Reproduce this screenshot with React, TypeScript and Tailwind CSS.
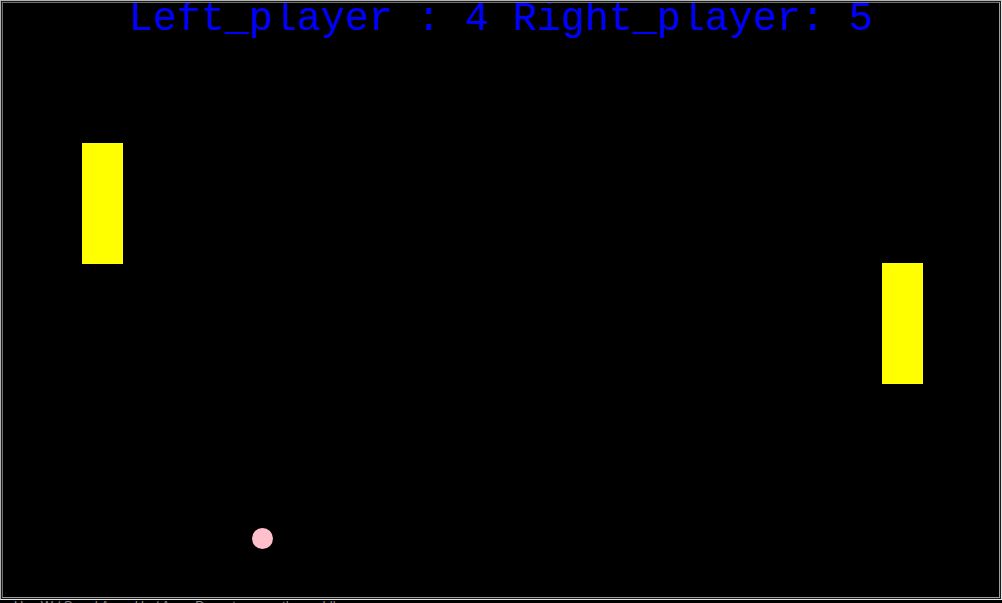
import React from 'react';

const paddles = [
  { id: 'left', x: 80, y: 141 },
  { id: 'right', x: 880, y: 261 },
];

export default function App() {
  const score = { left: 4, right: 5 };

  return (
    <div className="w-[1002px] h-[603px] overflow-hidden bg-black">
      {/* canvas frame, groove-ish border */}
      <div className="w-[1002px] h-[600px] border border-t-[#b4b4b4] border-l-[#b4b4b4] border-b-[#e6e6e6] border-r-[#e6e6e6]">
        <div className="w-full h-full border border-[#1a1a1a]">
          <div className="relative w-full h-full border border-t-[#707070] border-l-[#707070] border-b-[#a0a0a0] border-r-[#a0a0a0] bg-black overflow-hidden">
            <div className="absolute -top-[3px] left-0 right-0 text-center font-['Liberation_Mono',monospace] text-[40px] leading-[40px] text-[#0000ff] whitespace-pre">
              {`Left_player : ${score.left} Right_player: ${score.right}`}
            </div>
            {paddles.map((p) => (
              <div
                key={p.id}
                className="absolute w-[41px] h-[121px] bg-[#ffff00]"
                style={{ left: p.x - 1, top: p.y - 1 }}
              />
            ))}
            <div className="absolute left-[249px] top-[525px] w-[21px] h-[21px] rounded-full bg-[#ffc0cb]" />
          </div>
        </div>
      </div>
      <p className="pl-[14px] font-['Liberation_Sans',sans-serif] text-[13px] leading-[14px] text-[#8a8a8a] -mt-[1px]">
        Use W / S and ArrowUp / ArrowDown to move the paddles
      </p>
    </div>
  );
}
